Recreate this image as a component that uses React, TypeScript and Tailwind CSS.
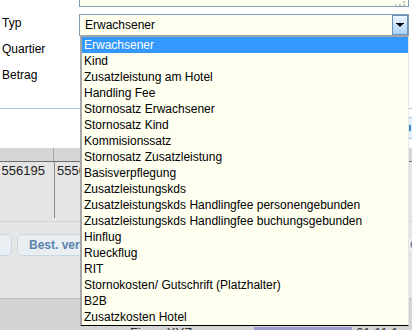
const items = [
  "Erwachsener",
  "Kind",
  "Zusatzleistung am Hotel",
  "Handling Fee",
  "Stornosatz Erwachsener",
  "Stornosatz Kind",
  "Kommisionssatz",
  "Stornosatz Zusatzleistung",
  "Basisverpflegung",
  "Zusatzleistungskds",
  "Zusatzleistungskds Handlingfee personengebunden",
  "Zusatzleistungskds Handlingfee buchungsgebunden",
  "Hinflug",
  "Rueckflug",
  "RIT",
  "Stornokosten/ Gutschrift (Platzhalter)",
  "B2B",
  "Zusatzkosten Hotel",
];

function Grip() {
  return (
    <svg width="13" height="5" viewBox="0 0 13 5" className="absolute right-[1px] bottom-0">
      <rect x="9" y="0" width="2" height="2" fill="#c8c8c8" />
      <rect x="5" y="3" width="2" height="2" fill="#c8c8c8" />
      <rect x="9" y="3" width="2" height="2" fill="#c8c8c8" />
      <rect x="1" y="3" width="2" height="2" fill="#d4d4d4" />
    </svg>
  );
}

function SelectButton() {
  return (
    <div className="w-[16px] h-[20px] border border-[#6b90b8] bg-gradient-to-b from-[#eef7ff] to-[#a9d3f7] flex items-center justify-center">
      <svg width="8" height="5" viewBox="0 0 8 5">
        <rect x="0" y="0" width="8" height="1" fill="#000" />
        <path d="M1 1 L7 1 L4 4 Z" fill="#000" />
      </svg>
    </div>
  );
}

export default function App() {
  return (
    <div className="relative w-[412px] h-[330px] overflow-hidden bg-white font-['Liberation_Sans',Arial,sans-serif] text-[12px] leading-[16px] text-black">
      {/* textarea (bottom part) */}
      <div className="pl-[79px]">
        <div className="relative h-[7px] w-[330px] border-x border-b border-[#7f9db9] bg-[#fffff0]">
          <Grip />
        </div>
      </div>

      {/* form */}
      <div className="flex h-[102px] border-b border-[#a3c6e6]">
        <div className="w-[79px] pl-[2px] pt-[8px] flex flex-col gap-[10px]">
          <span>Typ</span>
          <span>Quartier</span>
          <span>Betrag</span>
        </div>
        <div className="pt-[7px]">
          <div className="flex h-[22px] w-[330px] border border-[#7f9db9] border-b-[#9aa6b2] bg-[#fffff0]">
            <span className="flex-1 pl-[5px] pt-[2px]">Erwachsener</span>
            <SelectButton />
          </div>
        </div>
      </div>

      {/* white gap */}
      <div className="flex justify-end h-[39px]">
        <div className="w-[4px] h-[22px] mt-[8px] bg-[#e2eefa] border-y border-[#a8c8e8] flex items-center">
          <div className="w-[2px] h-[6px] bg-[#3a8ad6] ml-[1px]" />
        </div>
      </div>

      {/* table header */}
      <div className="flex h-[14px] bg-[#d6d6d6] border-b border-[#6e6e6e]">
        <div className="w-[54px] border-r border-[#a4a4a4]" />
        <div className="flex-1" />
      </div>

      {/* table row */}
      <div className="flex h-[59px] bg-[#e4e4e4] text-[13px] text-[#222]">
        <div className="w-[55px] border-r border-[#8a8a8a] overflow-hidden flex justify-end pr-[9px] pt-[1px] h-[56px]">
          <span>556195</span>
        </div>
        <div className="pl-[2px] pt-[1px]">5556195</div>
      </div>

      {/* toolbar */}
      <div className="h-[77px] bg-[#e5e7e7] border-t border-[#cdd6de] flex items-start pt-[12px] gap-[5px]">
        <div className="ml-[-40px] w-[52px] h-[22px] rounded-[5px] border border-[#c9d7e2] bg-[#e9eef2]" />
        <div className="w-[130px] h-[22px] rounded-[5px] border border-[#c9d7e2] bg-[#e9eef2] pl-[11px] pt-[2px] font-bold text-[#5a84ae]">
          Best. versenden
        </div>
        <div className="ml-auto mr-[-40px] w-[44px] h-[22px] rounded-[5px] border border-[#c9d7e2] bg-[#e9eef2] pl-[1px] pt-[2px] font-bold text-[#5a84ae]">
          Ok
        </div>
      </div>

      {/* bottom */}
      <div className="h-[32px] bg-[#d4d4d4] border-t border-[#bdbdbd] flex items-start pt-[26px] text-[13px] text-[#333]">
        <span className="ml-[130px] leading-[16px]">Firma XYZ</span>
        <div className="ml-[62px] w-[98px] h-[6px] bg-[#9c9cd0] mt-[2px]" />
        <span className="ml-[4px] leading-[16px]">01.11.1</span>
      </div>

      {/* open dropdown list */}
      <div className="absolute left-[80px] top-[36px] w-[329px] h-[290px] bg-[#fffff0] border-l-2 border-l-[#a6a6a6] border-t border-t-[#a6a6a6] border-b border-b-black border-r border-r-[#e8e8e0]">
        {items.map((item, i) => (
          <div
            key={item}
            className={`h-[16px] pl-[2px] whitespace-nowrap ${
              i === 0 ? "bg-[#3399ff] text-white" : "text-black"
            }`}
          >
            {item}
          </div>
        ))}
      </div>
    </div>
  );
}
